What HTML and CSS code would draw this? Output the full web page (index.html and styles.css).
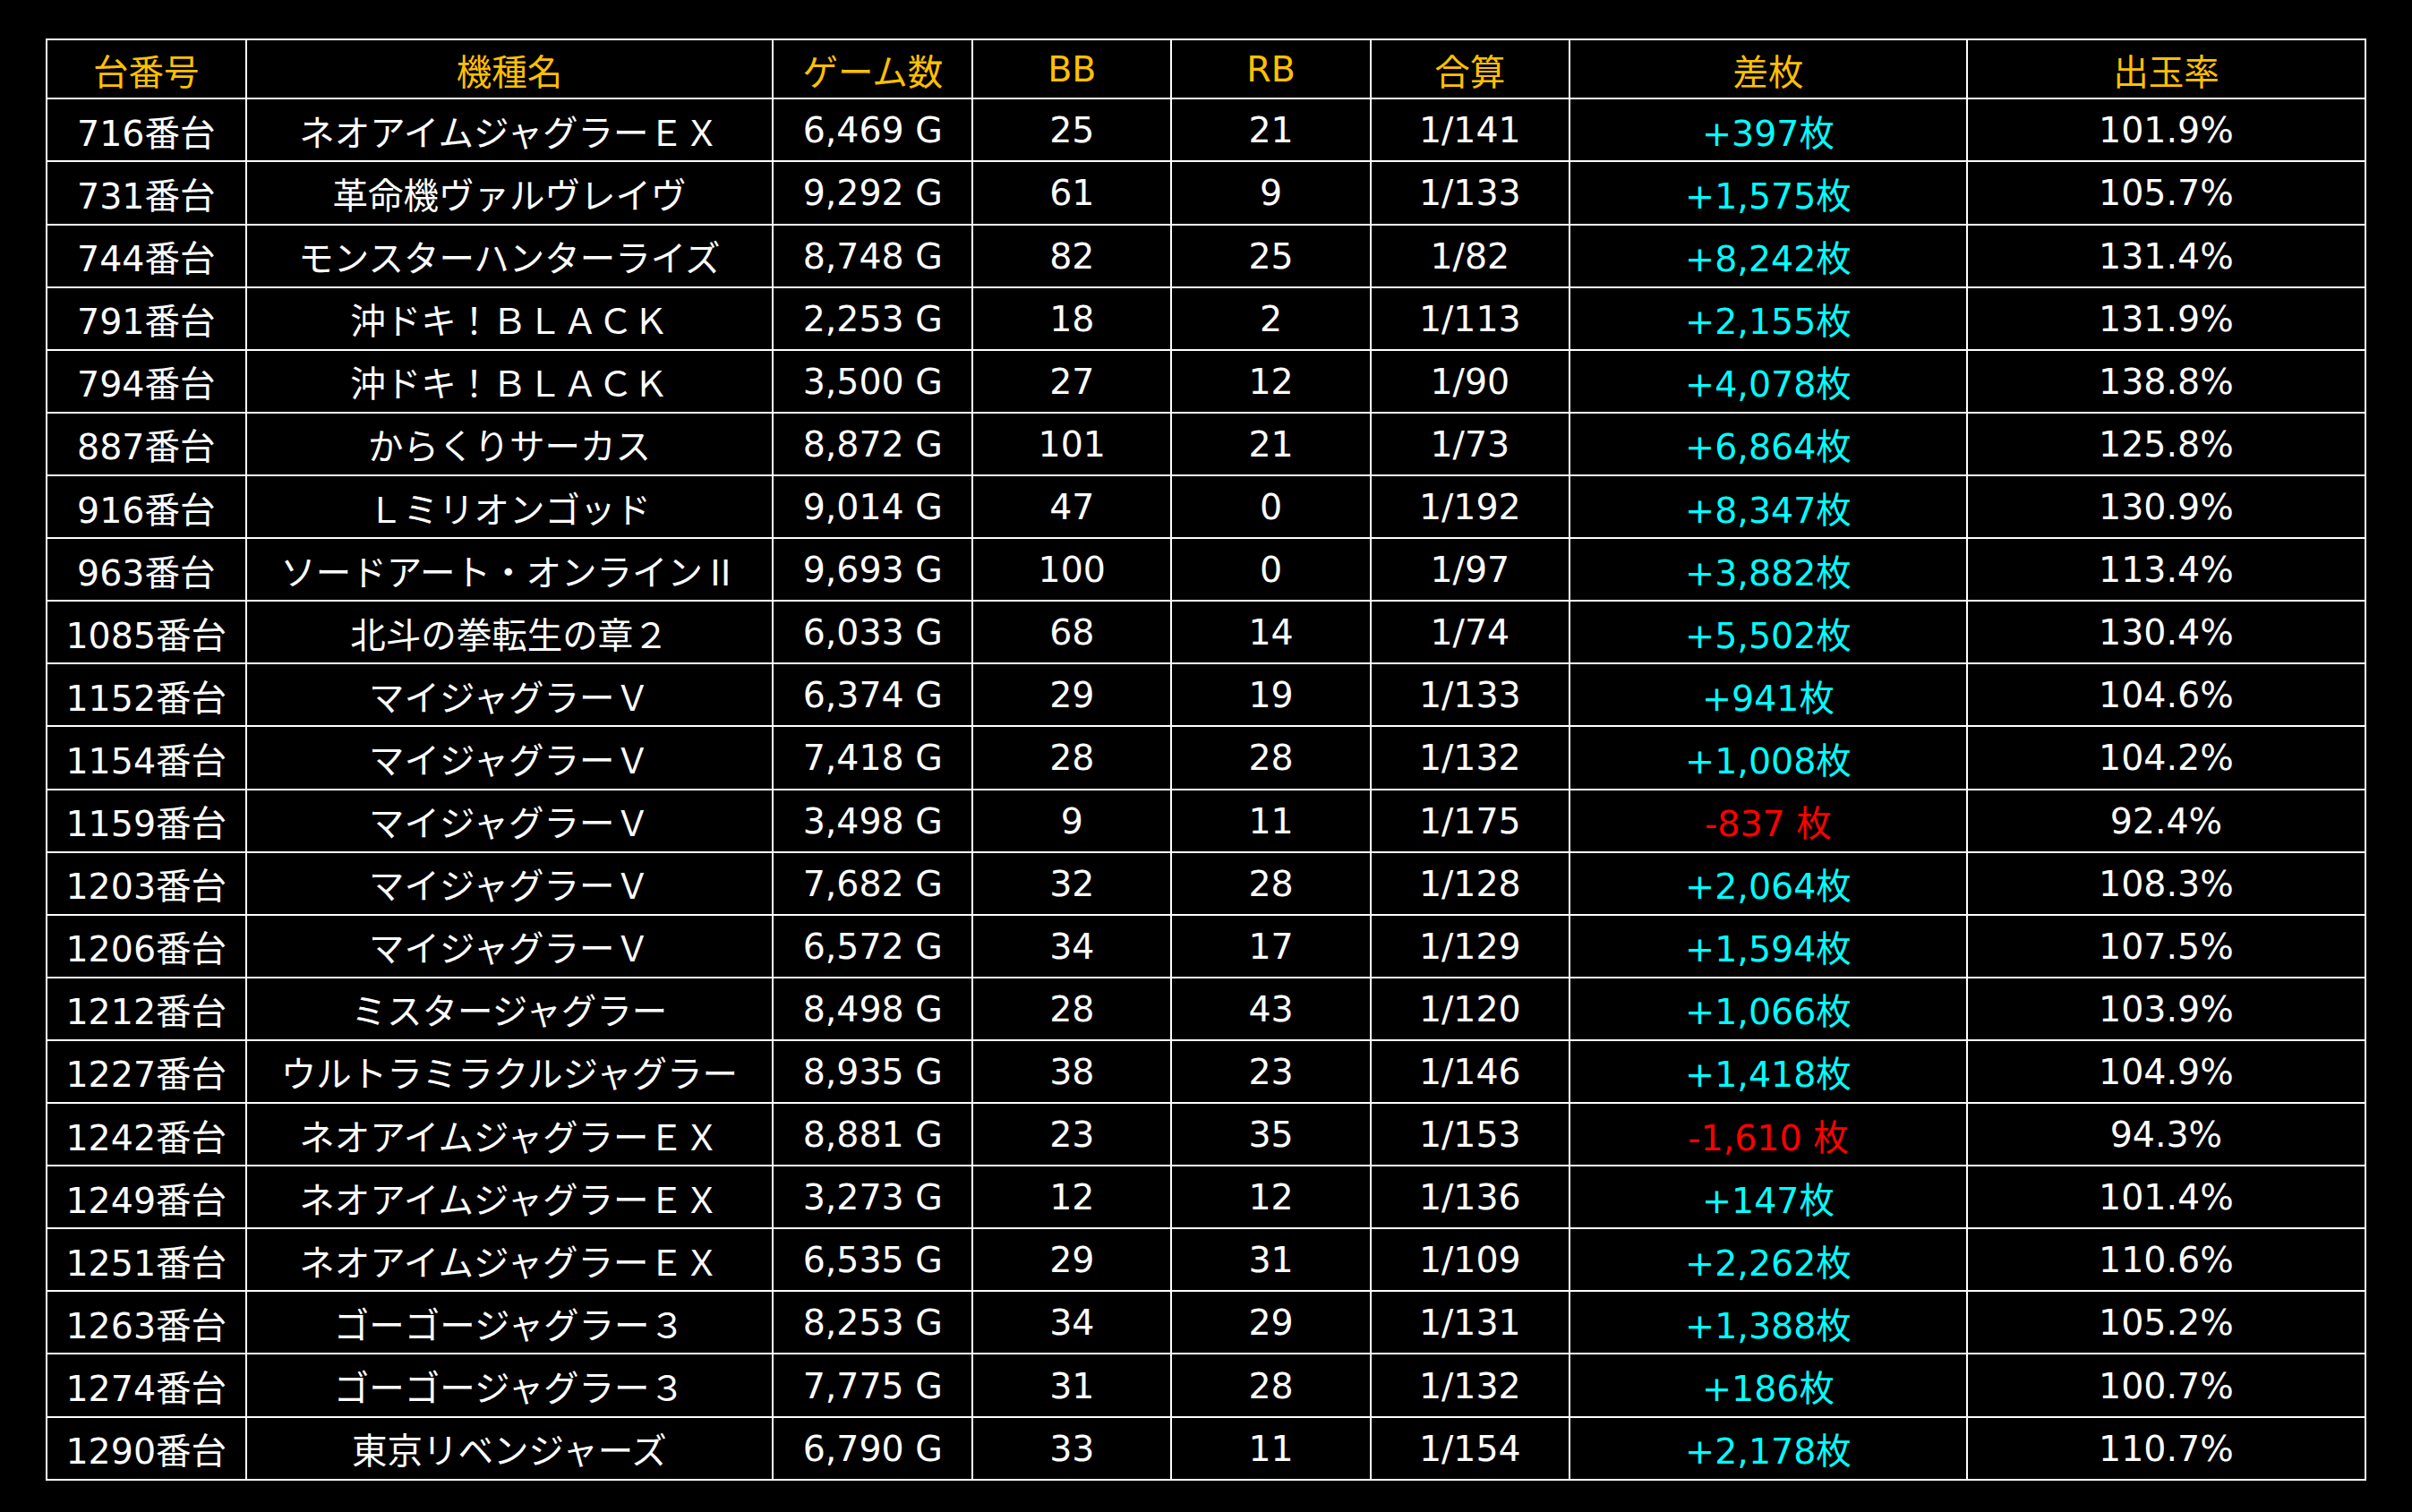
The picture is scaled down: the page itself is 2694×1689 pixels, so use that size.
FILE: index.html
```html
<!DOCTYPE html>
<html lang="ja">
<head>
<meta charset="utf-8">
<title>台データ</title>
<link rel="stylesheet" href="styles.css">
</head>
<body>
<div class="sheet">
<div class="tbl">
<div class="c hd">台番号</div><div class="c hd">機種名</div><div class="c hd">ゲーム数</div><div class="c hd">BB</div><div class="c hd">RB</div><div class="c hd">合算</div><div class="c hd">差枚</div><div class="c hd">出玉率</div>

<div class="c">716番台</div><div class="c">ネオアイムジャグラーＥＸ</div><div class="c">6,469 G</div><div class="c">25</div><div class="c">21</div><div class="c">1/141</div><div class="c plus">+397枚</div><div class="c">101.9%</div>
<div class="c">731番台</div><div class="c">革命機ヴァルヴレイヴ</div><div class="c">9,292 G</div><div class="c">61</div><div class="c">9</div><div class="c">1/133</div><div class="c plus">+1,575枚</div><div class="c">105.7%</div>
<div class="c">744番台</div><div class="c">モンスターハンターライズ</div><div class="c">8,748 G</div><div class="c">82</div><div class="c">25</div><div class="c">1/82</div><div class="c plus">+8,242枚</div><div class="c">131.4%</div>
<div class="c">791番台</div><div class="c">沖ドキ！ＢＬＡＣＫ</div><div class="c">2,253 G</div><div class="c">18</div><div class="c">2</div><div class="c">1/113</div><div class="c plus">+2,155枚</div><div class="c">131.9%</div>
<div class="c">794番台</div><div class="c">沖ドキ！ＢＬＡＣＫ</div><div class="c">3,500 G</div><div class="c">27</div><div class="c">12</div><div class="c">1/90</div><div class="c plus">+4,078枚</div><div class="c">138.8%</div>
<div class="c">887番台</div><div class="c">からくりサーカス</div><div class="c">8,872 G</div><div class="c">101</div><div class="c">21</div><div class="c">1/73</div><div class="c plus">+6,864枚</div><div class="c">125.8%</div>
<div class="c">916番台</div><div class="c">Ｌミリオンゴッド</div><div class="c">9,014 G</div><div class="c">47</div><div class="c">0</div><div class="c">1/192</div><div class="c plus">+8,347枚</div><div class="c">130.9%</div>
<div class="c">963番台</div><div class="c">ソードアート・オンライン<span class="cjk">Ⅱ</span></div><div class="c">9,693 G</div><div class="c">100</div><div class="c">0</div><div class="c">1/97</div><div class="c plus">+3,882枚</div><div class="c">113.4%</div>
<div class="c">1085番台</div><div class="c">北斗の拳転生の章２</div><div class="c">6,033 G</div><div class="c">68</div><div class="c">14</div><div class="c">1/74</div><div class="c plus">+5,502枚</div><div class="c">130.4%</div>
<div class="c">1152番台</div><div class="c">マイジャグラーＶ</div><div class="c">6,374 G</div><div class="c">29</div><div class="c">19</div><div class="c">1/133</div><div class="c plus">+941枚</div><div class="c">104.6%</div>
<div class="c">1154番台</div><div class="c">マイジャグラーＶ</div><div class="c">7,418 G</div><div class="c">28</div><div class="c">28</div><div class="c">1/132</div><div class="c plus">+1,008枚</div><div class="c">104.2%</div>
<div class="c">1159番台</div><div class="c">マイジャグラーＶ</div><div class="c">3,498 G</div><div class="c">9</div><div class="c">11</div><div class="c">1/175</div><div class="c minus">-837 枚</div><div class="c">92.4%</div>
<div class="c">1203番台</div><div class="c">マイジャグラーＶ</div><div class="c">7,682 G</div><div class="c">32</div><div class="c">28</div><div class="c">1/128</div><div class="c plus">+2,064枚</div><div class="c">108.3%</div>
<div class="c">1206番台</div><div class="c">マイジャグラーＶ</div><div class="c">6,572 G</div><div class="c">34</div><div class="c">17</div><div class="c">1/129</div><div class="c plus">+1,594枚</div><div class="c">107.5%</div>
<div class="c">1212番台</div><div class="c">ミスタージャグラー</div><div class="c">8,498 G</div><div class="c">28</div><div class="c">43</div><div class="c">1/120</div><div class="c plus">+1,066枚</div><div class="c">103.9%</div>
<div class="c">1227番台</div><div class="c">ウルトラミラクルジャグラー</div><div class="c">8,935 G</div><div class="c">38</div><div class="c">23</div><div class="c">1/146</div><div class="c plus">+1,418枚</div><div class="c">104.9%</div>
<div class="c">1242番台</div><div class="c">ネオアイムジャグラーＥＸ</div><div class="c">8,881 G</div><div class="c">23</div><div class="c">35</div><div class="c">1/153</div><div class="c minus">-1,610 枚</div><div class="c">94.3%</div>
<div class="c">1249番台</div><div class="c">ネオアイムジャグラーＥＸ</div><div class="c">3,273 G</div><div class="c">12</div><div class="c">12</div><div class="c">1/136</div><div class="c plus">+147枚</div><div class="c">101.4%</div>
<div class="c">1251番台</div><div class="c">ネオアイムジャグラーＥＸ</div><div class="c">6,535 G</div><div class="c">29</div><div class="c">31</div><div class="c">1/109</div><div class="c plus">+2,262枚</div><div class="c">110.6%</div>
<div class="c">1263番台</div><div class="c">ゴーゴージャグラー３</div><div class="c">8,253 G</div><div class="c">34</div><div class="c">29</div><div class="c">1/131</div><div class="c plus">+1,388枚</div><div class="c">105.2%</div>
<div class="c">1274番台</div><div class="c">ゴーゴージャグラー３</div><div class="c">7,775 G</div><div class="c">31</div><div class="c">28</div><div class="c">1/132</div><div class="c plus">+186枚</div><div class="c">100.7%</div>
<div class="c">1290番台</div><div class="c">東京リベンジャーズ</div><div class="c">6,790 G</div><div class="c">33</div><div class="c">11</div><div class="c">1/154</div><div class="c plus">+2,178枚</div><div class="c">110.7%</div>
</div>
</div>
</body>
</html>
```
FILE: styles.css
```css
html, body {
  margin: 0;
  padding: 0;
  background: #000;
}
body {
  width: 2694px;
  height: 1689px;
  overflow: hidden;
  font-family: "DejaVu Sans", "Noto Sans CJK JP", sans-serif;
  font-size: 39.5px;
  color: #fff;
}
.sheet {
  padding: 43.3px 0 0 51px;
}
.tbl {
  display: grid;
  grid-template-columns: 222.5px 588.8px 223px 222px 222.5px 222px 444.3px 444.6px;
  grid-template-rows: 66px repeat(22, 70.12px);
  width: max-content;
  border-top: 2px solid #fff;
  border-left: 2px solid #fff;
}
.c {
  box-sizing: border-box;
  border-right: 2px solid #fff;
  border-bottom: 2px solid #fff;
  display: flex;
  align-items: center;
  justify-content: center;
  white-space: nowrap;
}
.cjk {
  font-family: "Noto Sans CJK JP", sans-serif;
}
.hd {
  color: #ffc000;
}
.plus {
  color: #00ffff;
}
.minus {
  color: #ff0000;
}
```
